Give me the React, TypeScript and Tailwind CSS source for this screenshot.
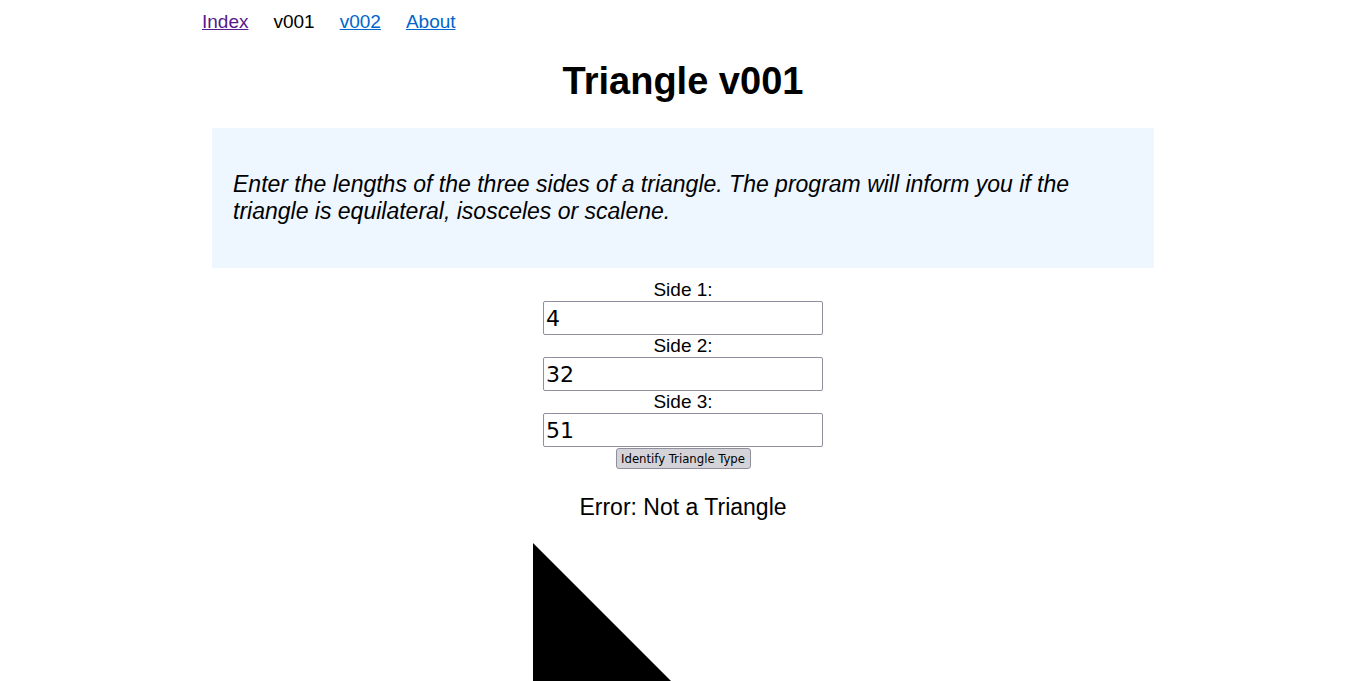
import React from 'react'

const inputFont = { fontFamily: '"DejaVu Sans", sans-serif' }

export default function App() {
  return (
    <div className="min-h-screen bg-white text-black" style={{ fontFamily: '"Liberation Sans", Arial, sans-serif' }}>
      <nav className="flex gap-[25px] pl-[202px] pt-[10px] text-[19px] leading-[24px]">
        <a href="#" className="underline text-[#551a8b]">Index</a>
        <span>v001</span>
        <a href="#" className="underline text-[#0066cc]">v002</a>
        <a href="#" className="underline text-[#0066cc]">About</a>
      </nav>

      <h1 className="text-center text-[38px] font-bold leading-[44px] mt-[25px]">Triangle v001</h1>

      <div className="mx-[212px] mt-[25px] bg-[#eef6ff] px-[21px] h-[140px] flex items-center">
        <p className="italic text-[23px] leading-[27px]">
          Enter the lengths of the three sides of a triangle. The program will inform you if the triangle is
          equilateral, isosceles or scalene.
        </p>
      </div>

      <form className="flex flex-col items-center mt-[11px]" onSubmit={e => e.preventDefault()}>
        <label className="text-[19px] leading-[22px]">Side 1:</label>
        <input defaultValue="4" className="w-[280px] h-[34px] border border-[#8f8f9d] rounded-[2px] px-[2px] text-[22px]" style={inputFont} />
        <label className="text-[19px] leading-[22px]">Side 2:</label>
        <input defaultValue="32" className="w-[280px] h-[34px] border border-[#8f8f9d] rounded-[2px] px-[2px] text-[22px]" style={inputFont} />
        <label className="text-[19px] leading-[22px]">Side 3:</label>
        <input defaultValue="51" className="w-[280px] h-[34px] border border-[#8f8f9d] rounded-[2px] px-[2px] text-[22px]" style={inputFont} />
        <button type="submit" className="mt-px h-[21px] w-[135px] bg-[#d4d4d8] border border-[#8f8f9d] rounded-[3px] text-[13px] leading-none" style={{ fontFamily: '"DejaVu Sans Condensed", "DejaVu Sans", sans-serif', fontStretch: 'condensed' }}>
          Identify Triangle Type
        </button>
      </form>

      <p className="text-center text-[23px] leading-[26px] mt-[25px]">Error: Not a Triangle</p>

      <div className="flex justify-center mt-[23px]">
        <svg width="300" height="300" viewBox="0 0 300 300">
          <polygon points="0,0 0,300 300,300" fill="black" />
        </svg>
      </div>
    </div>
  )
}
